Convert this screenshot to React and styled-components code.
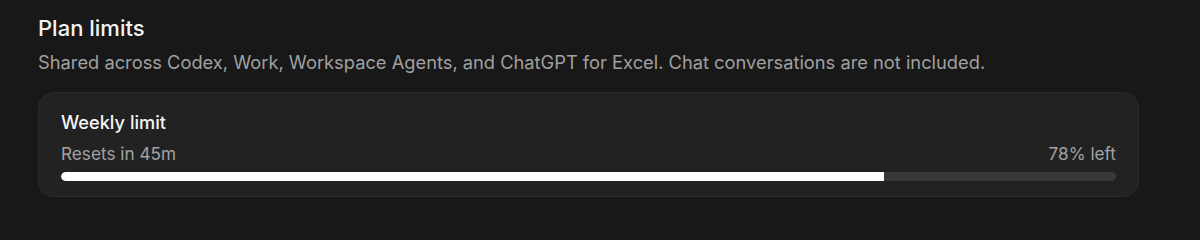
import React from 'react';
import styled, { createGlobalStyle } from 'styled-components';

const Global = createGlobalStyle`
  html, body {
    margin: 0;
    background: #181818;
    font-family: Inter, "Noto Sans", sans-serif;
    -webkit-font-smoothing: antialiased;
  }
`;

const Page = styled.div`
  padding: 14px 61px 0 38px;
  height: 240px;
  box-sizing: border-box;
`;

const Title = styled.h2`
  margin: 0;
  font-size: 22px;
  line-height: 28px;
  font-weight: 500;
  color: #f2f2f2;
`;

const Subtitle = styled.p`
  margin: 8px 0 0;
  font-size: 18.3px;
  line-height: 24px;
  color: #a0a0a0;
`;

const Card = styled.div`
  margin-top: 18px;
  background: #222222;
  border: 1px solid #2b2b2b;
  border-radius: 16px;
  padding: 17px 22px 15px;
`;

const CardTitle = styled.div`
  font-size: 18.2px;
  line-height: 24px;
  font-weight: 500;
  color: #f4f4f4;
`;

const Meta = styled.div`
  display: flex;
  justify-content: space-between;
  margin-top: 9px;
  font-size: 17.2px;
  line-height: 22px;
  color: #a2a2a2;
`;

const Track = styled.div`
  margin-top: 7px;
  height: 9px;
  border-radius: 5px;
  background: #383838;
  overflow: hidden;
`;

const Fill = styled.div`
  height: 100%;
  background: #ffffff;
  border-radius: 5px 0 0 5px;
`;

const limit = { name: 'Weekly limit', resets: 'Resets in 45m', left: 78 };

export default function App() {
  return (
    <>
      <Global />
      <Page>
        <Title>Plan limits</Title>
        <Subtitle>
          Shared across Codex, Work, Workspace Agents, and ChatGPT for Excel. Chat conversations are not included.
        </Subtitle>
        <Card>
          <CardTitle>{limit.name}</CardTitle>
          <Meta>
            <span>{limit.resets}</span>
            <span>{limit.left}% left</span>
          </Meta>
          <Track>
            <Fill style={{ width: `${limit.left}%` }} />
          </Track>
        </Card>
      </Page>
    </>
  );
}
